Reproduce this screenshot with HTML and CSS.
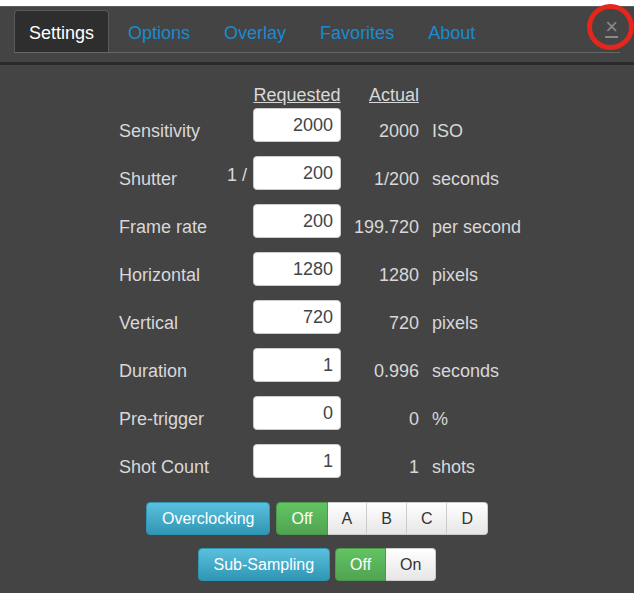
FILE: index.html
```html
<!DOCTYPE html>
<html>
<head>
<meta charset="utf-8">
<link rel="stylesheet" href="styles.css">
</head>
<body>
<div class="panel">
  <div class="tabs">
    <a class="tab active">Settings</a>
    <a class="tab">Options</a>
    <a class="tab">Overlay</a>
    <a class="tab">Favorites</a>
    <a class="tab">About</a>
    <a class="close">×</a>
  </div>
  <div class="divider"></div>
  <div class="content">
    <div class="cols hdrrow">
      <div></div><div></div>
      <div class="hdr center">Requested</div>
      <div class="hdr right">Actual</div>
      <div></div>
    </div>
    <div class="cols form">
      <div class="label">Sensitivity</div><div></div><div class="input">2000</div><div class="actual">2000</div><div class="unit">ISO</div>
      <div class="label">Shutter</div><div class="prefix">1 /</div><div class="input">200</div><div class="actual">1/200</div><div class="unit">seconds</div>
      <div class="label">Frame rate</div><div></div><div class="input">200</div><div class="actual">199.720</div><div class="unit">per second</div>
      <div class="label">Horizontal</div><div></div><div class="input">1280</div><div class="actual">1280</div><div class="unit">pixels</div>
      <div class="label">Vertical</div><div></div><div class="input">720</div><div class="actual">720</div><div class="unit">pixels</div>
      <div class="label">Duration</div><div></div><div class="input">1</div><div class="actual">0.996</div><div class="unit">seconds</div>
      <div class="label">Pre-trigger</div><div></div><div class="input">0</div><div class="actual">0</div><div class="unit">%</div>
      <div class="label">Shot Count</div><div></div><div class="input">1</div><div class="actual">1</div><div class="unit">shots</div>
    </div>
    <div class="btnrow first">
      <span class="btn btn-info">Overclocking</span>
      <span class="group">
        <span class="btn btn-success">Off</span><span class="btn btn-default">A</span><span class="btn btn-default">B</span><span class="btn btn-default">C</span><span class="btn btn-default">D</span>
      </span>
    </div>
    <div class="btnrow second">
      <span class="btn btn-info">Sub-Sampling</span>
      <span class="group">
        <span class="btn btn-success">Off</span><span class="btn btn-default">On</span>
      </span>
    </div>
  </div>
  <div class="annot"></div>
</div>
</body>
</html>
```

FILE: styles.css
```css
* { box-sizing: border-box; }
html, body { margin: 0; background: #fff; }
body { font-family: "Liberation Sans", Arial, sans-serif; }

.panel {
  position: relative;
  margin-top: 6px;
  width: 634px;
  height: 587px;
  background: #444;
  border-top: 1px solid #5c5c5c;
}

.tabs {
  display: flex;
  align-items: flex-end;
  margin: 0 14px;
  width: 606px;
  padding-top: 3px;
  border-bottom: 1px solid #666;
}
.tab {
  height: 42px;
  line-height: 38px;
  padding: 3px 14px 0;
  margin-right: 4px;
  border: 1px solid transparent;
  border-bottom: none;
  border-radius: 4px 4px 0 0;
  font-size: 18px;
  color: #1b8ad0;
}
.tab.active {
  color: #fff;
  background: #2e2e2e;
  border-color: #5a5a5a;
}
.close {
  margin-left: auto;
  align-self: flex-start;
  margin-top: 6px;
  margin-right: 2px;
  font-size: 22px;
  line-height: 22px;
  color: #8a8a8a;
  text-decoration: underline;
}

.divider {
  margin-top: 9px;
  height: 3px;
  background: #2b2b2b;
}

.content { padding-top: 20px; }

.cols {
  display: grid;
  grid-template-columns: 108px 26px 88px 78px auto;
  padding-left: 119px;
  font-size: 18px;
  color: #d8d8d8;
}
.hdrrow { margin-bottom: 3px; line-height: 20px; }
.hdr { text-decoration: underline; }
.center { text-align: center; }
.right { text-align: right; }

.form { row-gap: 14px; align-items: center; }
.label, .actual, .unit { padding-top: 13px; }
.prefix { padding-top: 4px; }
.input {
  height: 34px;
  line-height: 32px;
  background: #fff;
  border: 1px solid #ccc;
  border-radius: 4px;
  text-align: right;
  padding-right: 7px;
  color: #444;
}
.actual { text-align: right; }
.unit { padding-left: 13px; }

.btnrow {
  display: flex;
  justify-content: center;
  gap: 6px;
}
.btnrow.first { margin-top: 24px; }
.btnrow.second { margin-top: 13px; gap: 5px; }

.btn {
  display: inline-block;
  height: 33px;
  line-height: 31px;
  padding: 0 15px;
  font-size: 16px;
  border: 1px solid;
  border-radius: 4px;
  color: #fff;
}
.btn-info {
  background: linear-gradient(#5bc0de, #2f96b4);
  border-color: #2f96b4;
}
.group { display: flex; }
.group .btn { border-radius: 0; padding: 0 14px; }
.group .btn:first-child { border-radius: 4px 0 0 4px; }
.group .btn:last-child { border-radius: 0 4px 4px 0; }
.group .btn + .btn { border-left-width: 0; }
.btn-success {
  background: linear-gradient(#62c462, #51a351);
  border-color: #4a9a4a;
}
.btn-default {
  background: linear-gradient(#fff, #e6e6e6);
  color: #333;
  border-color: #ccc;
}

.annot {
  position: absolute;
  left: 587px;
  top: -3px;
  width: 47px;
  height: 46px;
  border: 5px solid #e5261c;
  border-radius: 50%;
}
```
